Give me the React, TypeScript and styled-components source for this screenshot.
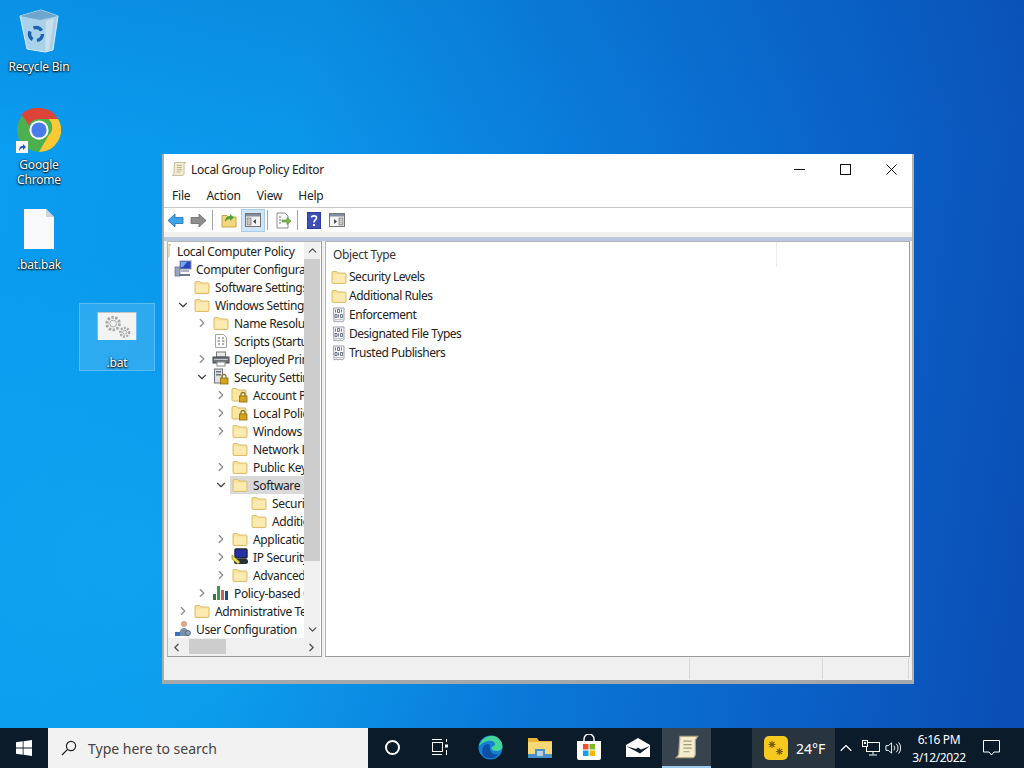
import React from "react";
import styled, { createGlobalStyle } from "styled-components";
import { ChevronRight, ChevronDown, ChevronUp, ChevronLeft } from "lucide-react";

const GlobalStyle = createGlobalStyle`
  html, body { margin: 0; padding: 0; }
  body { font-family: "Noto Sans", "Open Sans", sans-serif; font-size: 12px; color: #1a1a1a; }
  * { box-sizing: border-box; }
`;

// small drawings
const FolderIcon = ({ size = 16 }: { size?: number }) => (
  <svg width={size} height={size} viewBox="0 0 16 16">
    <path d="M1 3.500c0-.6.4-1 1-1h3.600l1.400 1.500h7c.6 0 1 .4 1 1v8.500c0 .6-.4 1-1 1H2c-.6 0-1-.4-1-1z" fill="#f9e096" stroke="#dcbe70" strokeWidth="1" />
    <path d="M2 5.500h12v8H2z" fill="#fcebb0" />
  </svg>
);

const LockFolderIcon = () => (
  <svg width="18" height="18" viewBox="0 0 18 18">
    <path d="M1 3.500c0-.6.4-1 1-1h3.600l1.400 1.500h7c.6 0 1 .4 1 1v9c0 .6-.4 1-1 1H2c-.6 0-1-.4-1-1z" fill="#fbe6a0" stroke="#d8b868" />
    <path d="M10 10V8.500a2 2 0 0 1 4 0V10" fill="none" stroke="#8a7a3a" strokeWidth="1.300" />
    <rect x="8.500" y="10" width="7.500" height="6" fill="#d6a51e" stroke="#8a6a14" strokeWidth=".8" />
  </svg>
);

const ComputerIcon = () => (
  <svg width="18" height="18" viewBox="0 0 18 18">
    <rect x="6" y="1" width="11" height="8" fill="#2a44c0" stroke="#8a96b4" />
    <path d="M7 2h6l-4 5H7z" fill="#6fa8f0" />
    <rect x="1" y="7" width="5" height="9" fill="#9aa6bc" stroke="#5a6680" strokeWidth=".7" />
    <rect x="7" y="10" width="8" height="2" fill="#aab4c8" />
    <rect x="5" y="14" width="11" height="2" fill="#6c7890" />
  </svg>
);

const ScriptsIcon = () => (
  <svg width="16" height="16" viewBox="0 0 16 16">
    <path d="M2.500 1.500h8l3 3v10h-11z" fill="#fbfbfb" stroke="#a4a4a4" />
    <path d="M5 5h2M9 5h2M4.500 8H7M9 8h2.500M5 11h2M9 11h2" stroke="#666" strokeWidth="1" />
  </svg>
);

const PrinterIcon = () => (
  <svg width="18" height="16" viewBox="0 0 18 16">
    <rect x="4.500" y="1" width="9" height="5" fill="#e8e8e8" stroke="#7a7a7a" />
    <rect x="1" y="6" width="16" height="6" fill="#70767e" stroke="#45494f" />
    <rect x="2" y="8" width="14" height="1" fill="#c4c8cc" />
    <rect x="5" y="11" width="8" height="4" fill="#fff" stroke="#8a8a8a" />
  </svg>
);

const SecurityIcon = () => (
  <svg width="18" height="18" viewBox="0 0 18 18">
    <rect x="2.500" y="1" width="8" height="14" fill="#dfe1e4" stroke="#6e7278" />
    <rect x="4" y="3" width="5" height="1.500" fill="#6e7278" />
    <rect x="4" y="6" width="5" height="1.500" fill="#6e7278" />
    <path d="M10 10V8.500a2 2 0 0 1 4 0V10" fill="none" stroke="#8a7a3a" strokeWidth="1.300" />
    <rect x="8.500" y="10" width="7.500" height="6" fill="#d6a51e" stroke="#8a6a14" strokeWidth=".8" />
  </svg>
);

const IpSecurityIcon = () => (
  <svg width="18" height="18" viewBox="0 0 18 18">
    <rect x="4" y="1" width="12" height="9" rx="1" fill="#2430a8" stroke="#20262e" strokeWidth="1.400" />
    <rect x="3" y="11" width="14" height="5" rx="2" fill="#2b3038" />
    <path d="M1 7l8 7-2 2-6-5z" fill="#e9e24a" stroke="#7c7a20" strokeWidth=".6" />
  </svg>
);

const ChartIcon = () => (
  <svg width="18" height="16" viewBox="0 0 18 16">
    <rect x="1" y="9" width="3" height="6" fill="#2f7a3e" />
    <rect x="5" y="1" width="3" height="14" fill="#3c9a4e" />
    <rect x="9" y="5" width="3" height="10" fill="#c9645a" />
    <rect x="13" y="6" width="3" height="9" fill="#1c4f80" />
  </svg>
);

const UserConfigIcon = () => (
  <svg width="18" height="18" viewBox="0 0 18 18">
    <circle cx="10" cy="4" r="3" fill="#d8a888" />
    <path d="M5 16c0-5 2-8 5-8s5 3 5 8z" fill="#7a8ea8" />
    <path d="M1 12h5v4H1z" fill="#3a72b8" />
    <circle cx="14" cy="13" r="2.400" fill="#8fa6c4" stroke="#4e6484" />
  </svg>
);

const PolicyDocIcon = () => (
  <svg width="16" height="16" viewBox="0 0 16 16">
    <path d="M2.500 1h10.500v12.500l-2 1.500-2-1-2 1-2-1-2 1z" fill="#f8f8fb" stroke="#9a9eaa" />
    <path d="M4.500 2.500v3M6.500 2.500h2v3h-2zM10.500 2.500v3M4 7.500h2v3H4zM7.500 7.500v3M9.500 7.500h2v3h-2z" fill="none" stroke="#4a5470" strokeWidth=".8" />
    <path d="M4 12.500h8" stroke="#b4b8c4" strokeWidth=".8" />
  </svg>
);

const ScrollIcon = ({ size = 16 }: { size?: number }) => (
  <svg width={size} height={size} viewBox="0 0 22 22">
    <path d="M5 2h15l-2 3v12c0 1.500-1 3-2 3H2c1-1 2-2 2-3z" fill="#f4eccf" stroke="#b3a884" strokeWidth="1" />
    <path d="M8 6h7M8 9h7M8 12h7M8 15h5" stroke="#a59a76" strokeWidth="1" />
  </svg>
);

const BackIcon = () => (
  <svg width="17" height="15" viewBox="0 0 17 15">
    <path d="M1 7.500L8 1v3.500h8v6H8V14z" fill="#3ea4e6" stroke="#1d6fb0" strokeWidth=".8" />
  </svg>
);

const ForwardIcon = () => (
  <svg width="17" height="15" viewBox="0 0 17 15">
    <path d="M16 7.500L9 1v3.500H1v6h8V14z" fill="#8e8e8e" stroke="#6a6a6a" strokeWidth=".8" />
  </svg>
);

const UpFolderIcon = () => (
  <svg width="16" height="16" viewBox="0 0 16 16">
    <path d="M1 3.500h5l1.500 1.500H15v10H1z" fill="#f3d77f" stroke="#c9a548" />
    <path d="M4 10c0-4 2-6 5-6V2l4 3.500L9 9V7c-2 0-3.500 1-5 3z" fill="#4ca63a" />
  </svg>
);

const PaneIcon = ({ flip }: { flip?: boolean }) => (
  <svg width="16" height="14" viewBox="0 0 16 14">
    <rect x=".5" y=".5" width="15" height="13" fill="#f4f4f4" stroke="#757575" />
    <rect x="1" y="1" width="14" height="2.500" fill="#7f8ea0" />
    <rect x={flip ? 10 : 2} y="5" width="4" height="7" fill="#c7c7c7" stroke="#6a6a6a" strokeWidth=".6" />
    <path d={flip ? "M5 6v5l3-2.500z" : "M11 6v5l-3-2.500z"} fill="#4a4a4a" />
  </svg>
);

const ExportIcon = () => (
  <svg width="17" height="17" viewBox="0 0 17 17">
    <path d="M2 1h8l3 3v12H2z" fill="#fcfcfc" stroke="#8e8e8e" />
    <path d="M4 5h2M4 8h2M4 11h2" stroke="#777" />
    <path d="M7 8h5V5.500l4 3.500-4 3.500V10H7z" fill="#7ab648" stroke="#4d8a2a" strokeWidth=".6" />
  </svg>
);

const HelpIcon = () => (
  <svg width="14" height="17" viewBox="0 0 14 17">
    <rect width="14" height="17" fill="#2c3c9c" />
    <rect x="1" y="1" width="12" height="15" fill="#3c50b8" />
    <path d="M4.500 5.500C4.500 3.500 9.500 3 9.500 5.800 9.500 8 7 7.800 7 10.500" fill="none" stroke="#fff" strokeWidth="1.700" />
    <rect x="6" y="12" width="2" height="2" fill="#fff" />
  </svg>
);

const MinimizeGlyph = () => (
  <svg width="11" height="11" viewBox="0 0 11 11">
    <path d="M0 5.500h11" stroke="#111" />
  </svg>
);

const MaximizeGlyph = () => (
  <svg width="11" height="11" viewBox="0 0 11 11">
    <rect x=".5" y=".5" width="10" height="10" fill="none" stroke="#111" />
  </svg>
);

const CloseGlyph = () => (
  <svg width="11" height="11" viewBox="0 0 11 11">
    <path d="M.5.500l10 10M10.500.500l-10 10" stroke="#111" />
  </svg>
);

const RecycleBinIcon = () => (
  <svg width="40" height="44" viewBox="0 0 40 44">
    <path d="M1 7L22 1l17 6-5 34-8 2-18-3z" fill="#a9d2ea" stroke="#d7edf8" strokeWidth="1" />
    <path d="M1 7l21-6 17 6-18 4z" fill="#6ca6ce" />
    <path d="M27 12l8-3-5 32-4 2z" fill="#c8dfec" />
    <circle cx="17" cy="25" r="6.500" fill="none" stroke="#1c62b0" strokeWidth="3.400" strokeDasharray="9 4.600" />
  </svg>
);

const ChromeIcon = () => (
  <svg width="44" height="44" viewBox="0 0 48 48">
    <circle cx="24" cy="24" r="24" fill="#4caf50" />
    <path d="M24 0a24 24 0 0 1 20.800 12H24a12 12 0 0 0-11 7L5 7A24 24 0 0 1 24 0z" fill="#db4437" />
    <path d="M44.800 12A24 24 0 0 1 24 48l10.400-18a12 12 0 0 0 0-18z" fill="#fcc934" />
    <circle cx="24" cy="24" r="10.500" fill="#fff" />
    <circle cx="24" cy="24" r="8.300" fill="#4a7be8" />
  </svg>
);

const ShortcutBadge = () => (
  <svg width="12" height="12" viewBox="0 0 12 12">
    <rect width="12" height="12" fill="#f6f6f6" />
    <path d="M3 10c0-3 1-5 4-5V3l3 3-3 3V7c-2 0-3 1-4 3z" fill="#1d5fbe" />
  </svg>
);

const BlankFileIcon = () => (
  <svg width="32" height="42" viewBox="0 0 32 42">
    <path d="M1 1h22l8 8v32H1z" fill="#f7f9fa" />
    <path d="M23 1l8 8h-8z" fill="#cfd4d8" />
  </svg>
);

const GearsThumb = () => (
  <svg width="40" height="29" viewBox="0 0 40 29">
    <rect width="40" height="29" fill="#f2f3f3" />
    <rect width="40" height="1" fill="#bfc2c4" />
    <circle cx="16" cy="12" r="6.500" fill="none" stroke="#a8a8a8" strokeWidth="3" strokeDasharray="2.500 1.500" />
    <circle cx="16" cy="12" r="3.500" fill="#f2f3f3" stroke="#a8a8a8" />
    <circle cx="28" cy="21" r="4.500" fill="none" stroke="#a8a8a8" strokeWidth="2.600" strokeDasharray="2 1.300" />
    <circle cx="28" cy="21" r="2" fill="#f2f3f3" stroke="#a8a8a8" />
  </svg>
);

const WinLogo = () => (
  <svg width="16" height="16" viewBox="0 0 16 16">
    <path d="M0 2.300L6.700 1.300V7.600H0zM7.500 1.200L16 0V7.600H7.500zM0 8.400H6.700V14.700L0 13.700zM7.500 8.400H16V16L7.500 14.800z" fill="#fff" />
  </svg>
);

const SearchIcon = () => (
  <svg width="16" height="16" viewBox="0 0 16 16">
    <circle cx="10" cy="6" r="4.600" fill="none" stroke="#222" strokeWidth="1.200" />
    <path d="M6.600 9.400L1 15" stroke="#222" strokeWidth="1.300" />
  </svg>
);

const TaskViewIcon = () => (
  <svg width="16" height="16" viewBox="0 0 16 16">
    <path d="M0 .5h10M0 15.500h10" stroke="#fff" />
    <rect x=".5" y="3.500" width="10" height="9" fill="none" stroke="#fff" />
    <path d="M14.500 0v3M14.500 11v5" stroke="#fff" />
    <rect x="13" y="5.500" width="3" height="3" fill="#fff" />
  </svg>
);

const EdgeIcon = () => (
  <svg width="25" height="25" viewBox="0 0 25 25">
    <circle cx="12.500" cy="12.500" r="12" fill="#1482cf" />
    <path d="M1 11C3 4 10 0 16 1c5 1 8.500 6 8.500 10.500 0 3-3 4.500-6 4.500-3 0-5-1-5-2.500 0-3 4-2 3.500-5C16 5 8 4 1 11z" fill="#44d49c" />
    <path d="M5 20c-2-5 0-11 5-11 3 0 1 5 3 8 2 2.500 5 3 7.500 2-3 5-12 6-15.500 1z" fill="#0f4fa8" />
  </svg>
);

const ExplorerIcon = () => (
  <svg width="24" height="22" viewBox="0 0 24 22">
    <path d="M0 2h9l2 3h13v17H0z" fill="#e9b43a" />
    <path d="M0 6h24v16H0z" fill="#f8d775" />
    <rect x="0" y="18" width="24" height="4" fill="#4a90c8" />
    <rect x="7" y="13" width="10" height="9" fill="#4a90c8" />
    <rect x="9" y="15" width="6" height="5" fill="#bcd0dc" />
  </svg>
);

const StoreIcon = () => (
  <svg width="24" height="26" viewBox="0 0 24 26">
    <path d="M7 7V5a5 5 0 0 1 10 0v2" fill="none" stroke="#fff" strokeWidth="1.400" />
    <path d="M0 7h24v17a2 2 0 0 1-2 2H2a2 2 0 0 1-2-2z" fill="#fff" />
    <rect x="6" y="10" width="5.500" height="5.500" fill="#e8542c" />
    <rect x="12.500" y="10" width="5.500" height="5.500" fill="#7eb822" />
    <rect x="6" y="16.500" width="5.500" height="5.500" fill="#1aa0e0" />
    <rect x="12.500" y="16.500" width="5.500" height="5.500" fill="#fcb900" />
  </svg>
);

const MailIcon = () => (
  <svg width="24" height="19" viewBox="0 0 24 19">
    <path d="M0 7L12 0l12 7v12H0z" fill="#fff" />
    <path d="M0 8l14 7.500L24 8l-9 3.500-3-2-2 1.500z" fill="#10202c" />
  </svg>
);

const WeatherIcon = () => (
  <svg width="24" height="24" viewBox="0 0 24 24">
    <rect width="24" height="24" rx="5" fill="#f6c91e" />
    <path d="M8 5v7M4.500 8.500h7M5.500 6l5 5M10.500 6l-5 5M15.500 12v7M12 15.500h7M13 13l5 5M18 13l-5 5" stroke="#7a5a10" strokeWidth="1.100" />
  </svg>
);

const NetworkIcon = () => (
  <svg width="18" height="16" viewBox="0 0 18 16">
    <rect x="4.500" y="2.500" width="13" height="9" fill="none" stroke="#fff" />
    <path d="M11 11.500v3M7 15h8" stroke="#fff" />
    <rect x=".5" y=".5" width="5" height="6" fill="#10202c" stroke="#fff" />
    <rect x="2" y="2" width="2" height="2" fill="#fff" />
  </svg>
);

const VolumeIcon = () => (
  <svg width="17" height="14" viewBox="0 0 17 14">
    <path d="M1 4.500h2.500L7 1.500v11l-3.500-3H1z" fill="none" stroke="#fff" />
    <path d="M9.500 4.500a4 4 0 0 1 0 5M12 2.500a7 7 0 0 1 0 9M14.500 1a9.500 9.500 0 0 1 0 12" fill="none" stroke="#fff" />
  </svg>
);

const NotificationIcon = () => (
  <svg width="17" height="16" viewBox="0 0 17 16">
    <path d="M.5.500h16v11.500H11l-2.500 3-2.500-3H.5z" fill="none" stroke="#fff" />
  </svg>
);

type TreeItem = { depth: number; icon: React.ReactNode; text: string; arrow?: "right" | "down"; selected?: boolean };

const treeItems: TreeItem[] = [
  { depth: -1, icon: <ScrollIcon />, text: "Local Computer Policy" },
  { depth: 0, icon: <ComputerIcon />, text: "Computer Configuration" },
  { depth: 1, icon: <FolderIcon />, text: "Software Settings" },
  { depth: 1, icon: <FolderIcon />, text: "Windows Settings", arrow: "down" },
  { depth: 2, icon: <FolderIcon />, text: "Name Resolution Policy", arrow: "right" },
  { depth: 2, icon: <ScriptsIcon />, text: "Scripts (Startup/Shutdown)" },
  { depth: 2, icon: <PrinterIcon />, text: "Deployed Printers", arrow: "right" },
  { depth: 2, icon: <SecurityIcon />, text: "Security Settings", arrow: "down" },
  { depth: 3, icon: <LockFolderIcon />, text: "Account Policies", arrow: "right" },
  { depth: 3, icon: <LockFolderIcon />, text: "Local Policies", arrow: "right" },
  { depth: 3, icon: <FolderIcon />, text: "Windows Firewall", arrow: "right" },
  { depth: 3, icon: <FolderIcon />, text: "Network List" },
  { depth: 3, icon: <FolderIcon />, text: "Public Key Policies", arrow: "right" },
  { depth: 3, icon: <FolderIcon />, text: "Software", arrow: "down", selected: true },
  { depth: 4, icon: <FolderIcon />, text: "Security Levels" },
  { depth: 4, icon: <FolderIcon />, text: "Additional Rules" },
  { depth: 3, icon: <FolderIcon />, text: "Application Control", arrow: "right" },
  { depth: 3, icon: <IpSecurityIcon />, text: "IP Security Policies", arrow: "right" },
  { depth: 3, icon: <FolderIcon />, text: "Advanced Audit", arrow: "right" },
  { depth: 2, icon: <ChartIcon />, text: "Policy-based QoS", arrow: "right" },
  { depth: 1, icon: <FolderIcon />, text: "Administrative Templates", arrow: "right" },
  { depth: 0, icon: <UserConfigIcon />, text: "User Configuration" },
];

const listItems = [
  { folder: true, text: "Security Levels" },
  { folder: true, text: "Additional Rules" },
  { folder: false, text: "Enforcement" },
  { folder: false, text: "Designated File Types" },
  { folder: false, text: "Trusted Publishers" },
];

export default function App() {
  return (
    <Screen>
      <GlobalStyle />
      <Desktop>
        <DesktopIcon $left={0} $top={9} $width={78}>
          <RecycleBinIcon />
          <IconLabel $gap={6}>Recycle Bin</IconLabel>
        </DesktopIcon>
        <DesktopIcon $left={0} $top={108} $width={78}>
          <ChromeWrap>
            <ChromeIcon />
            <Badge><ShortcutBadge /></Badge>
          </ChromeWrap>
          <IconLabel $gap={5}>Google<br />Chrome</IconLabel>
        </DesktopIcon>
        <DesktopIcon $left={0} $top={208} $width={78}>
          <BlankFileIcon />
          <IconLabel $gap={7}>.bat.bak</IconLabel>
        </DesktopIcon>
        <SelectedIcon $left={79} $top={303} $width={76}>
          <GearsThumb />
          <IconLabel $gap={15}>.bat</IconLabel>
        </SelectedIcon>

        <Window>
          <TitleBar>
            <ScrollIcon />
            <TitleText>Local Group Policy Editor</TitleText>
            <Controls>
              <ControlButton><MinimizeGlyph /></ControlButton>
              <ControlButton><MaximizeGlyph /></ControlButton>
              <ControlButton><CloseGlyph /></ControlButton>
            </Controls>
          </TitleBar>
          <MenuBar>
            <MenuItem>File</MenuItem>
            <MenuItem>Action</MenuItem>
            <MenuItem>View</MenuItem>
            <MenuItem>Help</MenuItem>
          </MenuBar>
          <Toolbar>
            <ToolButton><BackIcon /></ToolButton>
            <ToolButton><ForwardIcon /></ToolButton>
            <ToolSeparator />
            <ToolButton $wide><UpFolderIcon /></ToolButton>
            <ToolButton $wide $active><PaneIcon /></ToolButton>
            <ToolSeparator />
            <ToolButton><ExportIcon /></ToolButton>
            <ToolSeparator />
            <ToolButton><HelpIcon /></ToolButton>
            <ToolButton $wide><PaneIcon flip /></ToolButton>
          </Toolbar>
          <ToolbarGap />
          <Panes>
            <TreePane>
              <TreeViewport>
                {treeItems.map((item) => (
                  <TreeRow key={item.text} $depth={item.depth}>
                    <Arrow>
                      {item.arrow === "right" && <ChevronRight size={14} color="#8a8a8a" strokeWidth={2} />}
                      {item.arrow === "down" && <ChevronDown size={14} color="#404040" strokeWidth={2} />}
                    </Arrow>
                    <TreeLabel $selected={item.selected}>
                      <TreeIconBox>{item.icon}</TreeIconBox>
                      <span>{item.text}</span>
                    </TreeLabel>
                  </TreeRow>
                ))}
              </TreeViewport>
              <VScroll>
                <ScrollArrow><ChevronUp size={13} color="#505050" strokeWidth={2.4} /></ScrollArrow>
                <VTrack><VThumb /></VTrack>
                <ScrollArrow><ChevronDown size={13} color="#505050" strokeWidth={2.4} /></ScrollArrow>
              </VScroll>
              <HScroll>
                <HArrow><ChevronLeft size={13} color="#505050" strokeWidth={2.4} /></HArrow>
                <HTrack><HThumb /></HTrack>
                <HArrow><ChevronRight size={13} color="#505050" strokeWidth={2.4} /></HArrow>
              </HScroll>
            </TreePane>
            <ListPane>
              <ListHeader>
                <HeaderCell>Object Type</HeaderCell>
                <HeaderRest />
              </ListHeader>
              {listItems.map((item) => (
                <ListRow key={item.text}>
                  {item.folder ? <FolderIcon /> : <PolicyDocIcon />}
                  <span>{item.text}</span>
                </ListRow>
              ))}
            </ListPane>
          </Panes>
          <StatusBar>
            <StatusCell $width={527} />
            <StatusCell $width={134} />
            <StatusCell $width={86} />
          </StatusBar>
        </Window>
      </Desktop>

      <Taskbar>
        <StartButton><WinLogo /></StartButton>
        <SearchBox>
          <SearchIcon />
          <SearchText>Type here to search</SearchText>
        </SearchBox>
        <TaskIcons>
          <TaskIcon><CortanaRing /></TaskIcon>
          <TaskIcon $nudge={3}><TaskViewIcon /></TaskIcon>
          <TaskIcon><EdgeIcon /></TaskIcon>
          <TaskIcon><ExplorerIcon /></TaskIcon>
          <TaskIcon><StoreIcon /></TaskIcon>
          <TaskIcon><MailIcon /></TaskIcon>
          <TaskIcon $active><ScrollIcon size={26} /></TaskIcon>
        </TaskIcons>
        <Weather>
          <WeatherIcon />
          <span>24°F</span>
        </Weather>
        <Tray>
          <TrayIcon $width={22}><ChevronUp size={20} color="#fff" strokeWidth={1.3} /></TrayIcon>
          <TrayIcon $width={28}><NetworkIcon /></TrayIcon>
          <TrayIcon $width={16}><VolumeIcon /></TrayIcon>
          <Clock>
            <div>6:16 PM</div>
            <div>3/12/2022</div>
          </Clock>
          <TrayIcon $width={28}><NotificationIcon /></TrayIcon>
        </Tray>
      </Taskbar>
    </Screen>
  );
}

const Screen = styled.div`
  width: 1024px;
  height: 768px;
  display: flex;
  flex-direction: column;
  overflow: hidden;
`;

const Desktop = styled.div`
  position: relative;
  height: 728px;
  background:
    radial-gradient(ellipse 420px 300px at 130px 560px, rgba(20, 175, 245, 0.45), transparent),
    linear-gradient(180deg, rgba(4, 60, 150, 0.12), transparent 20%),
    linear-gradient(98deg, #0a9df0 0%, #0a97ea 28%, #0a7cda 52%, #0a62c8 78%, #0a4db4 100%);
`;

const DesktopIcon = styled.div<{ $left: number; $top: number; $width: number }>`
  position: absolute;
  left: ${(p) => p.$left}px;
  top: ${(p) => p.$top}px;
  width: ${(p) => p.$width}px;
  display: flex;
  flex-direction: column;
  align-items: center;
`;

const SelectedIcon = styled(DesktopIcon)`
  height: 68px;
  padding-top: 8px;
  background: rgba(255, 255, 255, 0.14);
  border: 1px solid rgba(255, 255, 255, 0.22);
`;

const IconLabel = styled.div<{ $gap: number }>`
  margin-top: ${(p) => p.$gap}px;
  color: #fff;
  font-size: 12px;
  line-height: 15px;
  text-align: center;
  letter-spacing: -0.2px;
  text-shadow: 0 1px 2px #000, 0 0 2px #000;
`;

const ChromeWrap = styled.div`
  position: relative;
  height: 44px;
`;

const Badge = styled.div`
  position: absolute;
  left: -1px;
  bottom: -1px;
  line-height: 0;
`;

const Window = styled.div`
  position: absolute;
  left: 162px;
  top: 154px;
  width: 752px;
  height: 530px;
  display: flex;
  flex-direction: column;
  background: #f0f0f0;
  border-left: 2px solid #a8adb0;
  border-right: 2px solid #b0b3b5;
  border-bottom: 4px solid #a4a8aa;
`;

const TitleBar = styled.div`
  height: 30px;
  flex: none;
  display: flex;
  align-items: center;
  padding-left: 7px;
  background: #fff;
`;

const TitleText = styled.div`
  margin-left: 4px;
  font-size: 12px;
  letter-spacing: -0.3px;
  color: #222;
`;

const Controls = styled.div`
  margin-left: auto;
  margin-right: -2px;
  display: flex;
`;

const ControlButton = styled.div`
  width: 46px;
  height: 30px;
  display: flex;
  align-items: center;
  justify-content: center;
`;

const MenuBar = styled.div`
  height: 24px;
  flex: none;
  display: flex;
  align-items: center;
  padding-left: 8px;
  gap: 16px;
  background: #fff;
  border-bottom: 1px solid #c9c9c9;
`;

const MenuItem = styled.div`
  font-size: 12px;
  letter-spacing: -0.2px;
  color: #222;
`;

const Toolbar = styled.div`
  height: 24px;
  flex: none;
  display: flex;
  align-items: center;
  background: #fff;
`;

const ToolButton = styled.div<{ $active?: boolean; $wide?: boolean }>`
  width: ${(p) => (p.$wide ? 24 : 23)}px;
  height: 23px;
  display: flex;
  align-items: center;
  justify-content: center;
  background: ${(p) => (p.$active ? "#cfe4f7" : "transparent")};
  border: 1px solid ${(p) => (p.$active ? "#a9cdec" : "transparent")};
`;

const ToolSeparator = styled.div`
  width: 1px;
  height: 20px;
  margin: 0 4px 0 2px;
  background: #a6a6a6;
`;

const ToolbarGap = styled.div`
  height: 9px;
  flex: none;
  background: linear-gradient(180deg, #f3f1ee 0 5px, #bcc8dc 5px);
`;

const Panes = styled.div`
  height: 416px;
  flex: none;
  display: flex;
  justify-content: space-between;
  padding: 0 2px 0 3px;
  background: #f0f0f0;
`;

const TreePane = styled.div`
  width: 155px;
  display: grid;
  grid-template-columns: 136px 16px;
  grid-template-rows: 396px 18px;
  background: #fff;
  border: 1px solid #9b9b9b;
  border-left-color: #b4b4b4;
  border-top-color: #b4b4b4;
`;

const TreeViewport = styled.div`
  overflow: hidden;
  background: #fff;
`;

const TreeRow = styled.div<{ $depth: number }>`
  height: 18px;
  display: flex;
  align-items: center;
  white-space: nowrap;
  margin-left: ${(p) => 6 + (p.$depth - 1) * 19}px;
`;

const Arrow = styled.div`
  width: 18px;
  flex: none;
  display: flex;
  justify-content: center;
`;

const TreeLabel = styled.div<{ $selected?: boolean }>`
  height: 18px;
  flex: 1;
  display: flex;
  align-items: center;
  gap: 4px;
  padding-left: 1px;
  font-size: 12px;
  letter-spacing: -0.35px;
  color: #222;
  background: ${(p) => (p.$selected ? "#d9d9d9" : "transparent")};
`;

const TreeIconBox = styled.div`
  width: 18px;
  flex: none;
  display: flex;
  justify-content: center;
  line-height: 0;
`;

const VScroll = styled.div`
  display: flex;
  flex-direction: column;
  background: #f0f0f0;
`;

const ScrollArrow = styled.div`
  height: 17px;
  flex: none;
  display: flex;
  align-items: center;
  justify-content: center;
`;

const VTrack = styled.div`
  flex: 1;
`;

const VThumb = styled.div`
  height: 302px;
  background: #cdcdcd;
`;

const HScroll = styled.div`
  grid-column: 1 / 3;
  display: flex;
  background: #f0f0f0;
`;

const HArrow = styled.div`
  width: 17px;
  flex: none;
  display: flex;
  align-items: center;
  justify-content: center;
`;

const HTrack = styled.div`
  flex: 1;
  padding: 1px 0;
`;

const HThumb = styled.div`
  width: 37px;
  height: 15px;
  margin-left: 4px;
  background: #cdcdcd;
`;

const ListPane = styled.div`
  width: 585px;
  background: #fff;
  border: 1px solid #9b9b9b;
  border-left-color: #b4b4b4;
  border-top-color: #b4b4b4;
`;

const ListHeader = styled.div`
  height: 25px;
  display: flex;
`;

const HeaderCell = styled.div`
  width: 451px;
  padding: 4px 0 0 7px;
  font-size: 12px;
  letter-spacing: -0.35px;
  color: #333;
  border-right: 1px solid #ececec;
`;

const HeaderRest = styled.div`
  flex: 1;
`;

const ListRow = styled.div`
  height: 19px;
  display: flex;
  align-items: center;
  gap: 2px;
  padding-left: 5px;
  font-size: 12px;
  letter-spacing: -0.47px;
  color: #222;
`;

const StatusBar = styled.div`
  flex: 1;
  display: flex;
  padding: 1px 3px 1px 0;
  background: #f0f0f0;
`;

const StatusCell = styled.div<{ $width: number }>`
  width: ${(p) => p.$width}px;
  border-right: 1px solid #d8d8d8;
`;

const Taskbar = styled.div`
  height: 40px;
  display: flex;
  align-items: stretch;
  background: #0b1b2a;
`;

const StartButton = styled.div`
  width: 48px;
  display: flex;
  align-items: center;
  justify-content: center;
`;

const SearchBox = styled.div`
  width: 320px;
  display: flex;
  align-items: center;
  padding-left: 13px;
  gap: 11px;
  background: #f2f2f2;
`;

const SearchText = styled.div`
  font-size: 14px;
  color: #444;
`;

const TaskIcons = styled.div`
  display: flex;
`;

const TaskIcon = styled.div<{ $active?: boolean; $nudge?: number }>`
  width: 49px;
  display: flex;
  align-items: center;
  justify-content: center;
  padding-right: ${(p) => p.$nudge ?? 0}px;
  background: ${(p) => (p.$active ? "#37434e" : "transparent")};
  border-bottom: 2px solid ${(p) => (p.$active ? "#9cc8ec" : "transparent")};
`;

const CortanaRing = styled.div`
  width: 15px;
  height: 15px;
  border: 2px solid #fff;
  border-radius: 50%;
`;

const Weather = styled.div`
  margin-left: 41px;
  width: 83px;
  display: flex;
  align-items: center;
  gap: 8px;
  padding-left: 12px;
  font-size: 14px;
  color: #fff;
  background: #28343e;
`;

const Tray = styled.div`
  flex: 1;
  display: flex;
  align-items: center;
  color: #fff;
`;

const TrayIcon = styled.div<{ $width: number }>`
  width: ${(p) => p.$width}px;
  flex: none;
  display: flex;
  justify-content: center;
`;

const Clock = styled.div`
  width: 76px;
  padding-top: 1px;
  font-size: 12px;
  line-height: 18px;
  text-align: center;
  letter-spacing: -0.4px;
`;
